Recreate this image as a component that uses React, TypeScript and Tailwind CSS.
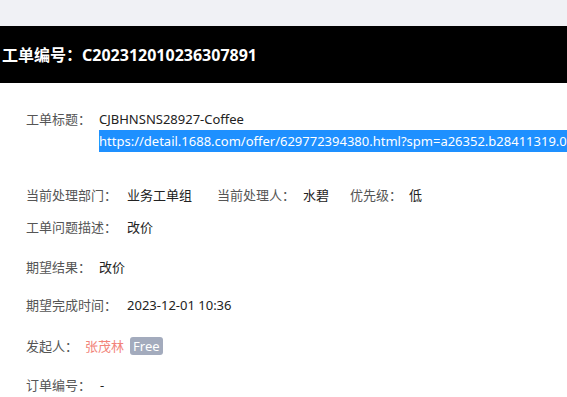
import React from "react";

const font = { fontFamily: '"Noto Sans", "Noto Sans CJK SC", sans-serif' };

const Label = ({ children }: { children: React.ReactNode }) => (
    <span className="shrink-0 whitespace-nowrap text-[#555555]">{children}</span>
);

const Value = ({ children, className = "" }: { children: React.ReactNode; className?: string }) => (
    <span className={"whitespace-nowrap text-[#222222] " + className}>{children}</span>
);

const App = () => {
    return (
        <div className="w-[567px] h-[397px] overflow-hidden bg-white" style={font}>
            <div className="h-[26px] bg-[#f0f1f5]" />
            <div className="flex h-[57px] items-center bg-black pl-[2px] pt-[1px]">
                <span className="text-[16px] font-bold text-white">工单编号：C202312010236307891</span>
            </div>
            <div className="pl-[26px] pt-[25px] text-[13px] leading-[22px]">
                <div className="flex">
                    <Label>工单标题：</Label>
                    <div className="ml-[8px] flex min-w-0 flex-1 flex-col overflow-hidden">
                        <Value>CJBHNSNS28927-Coffee</Value>
                        <span className="whitespace-nowrap bg-[#1e90ff] text-white">
                            https://detail.1688.com/offer/629772394380.html?spm=a26352.b28411319.0.0
                        </span>
                    </div>
                </div>
                <div className="mt-[32px] flex">
                    <Label>当前处理部门：</Label>
                    <Value className="ml-[10px]">业务工单组</Value>
                    <span className="ml-[25px] flex"><Label>当前处理人：</Label></span>
                    <Value className="ml-[8px]">水碧</Value>
                    <span className="ml-[21px] flex"><Label>优先级：</Label></span>
                    <Value className="ml-[7px]">低</Value>
                </div>
                <div className="mt-[10px] flex">
                    <Label>工单问题描述：</Label>
                    <Value className="ml-[10px]">改价</Value>
                </div>
                <div className="mt-[18px] flex">
                    <Label>期望结果：</Label>
                    <Value className="ml-[8px]">改价</Value>
                </div>
                <div className="mt-[16px] flex">
                    <Label>期望完成时间：</Label>
                    <Value className="ml-[10px]">2023-12-01 10:36</Value>
                </div>
                <div className="mt-[19px] flex items-center">
                    <Label>发起人：</Label>
                    <span className="ml-[7px] text-[#f2847a]">张茂林</span>
                    <span className="ml-[6px] rounded-[3px] bg-[#a3abbd] px-[3px] text-[13px] leading-[18px] text-white">Free</span>
                </div>
                <div className="mt-[17px] flex">
                    <Label>订单编号：</Label>
                    <Value className="ml-[9px]">-</Value>
                </div>
            </div>
        </div>
    );
};

export default App;
